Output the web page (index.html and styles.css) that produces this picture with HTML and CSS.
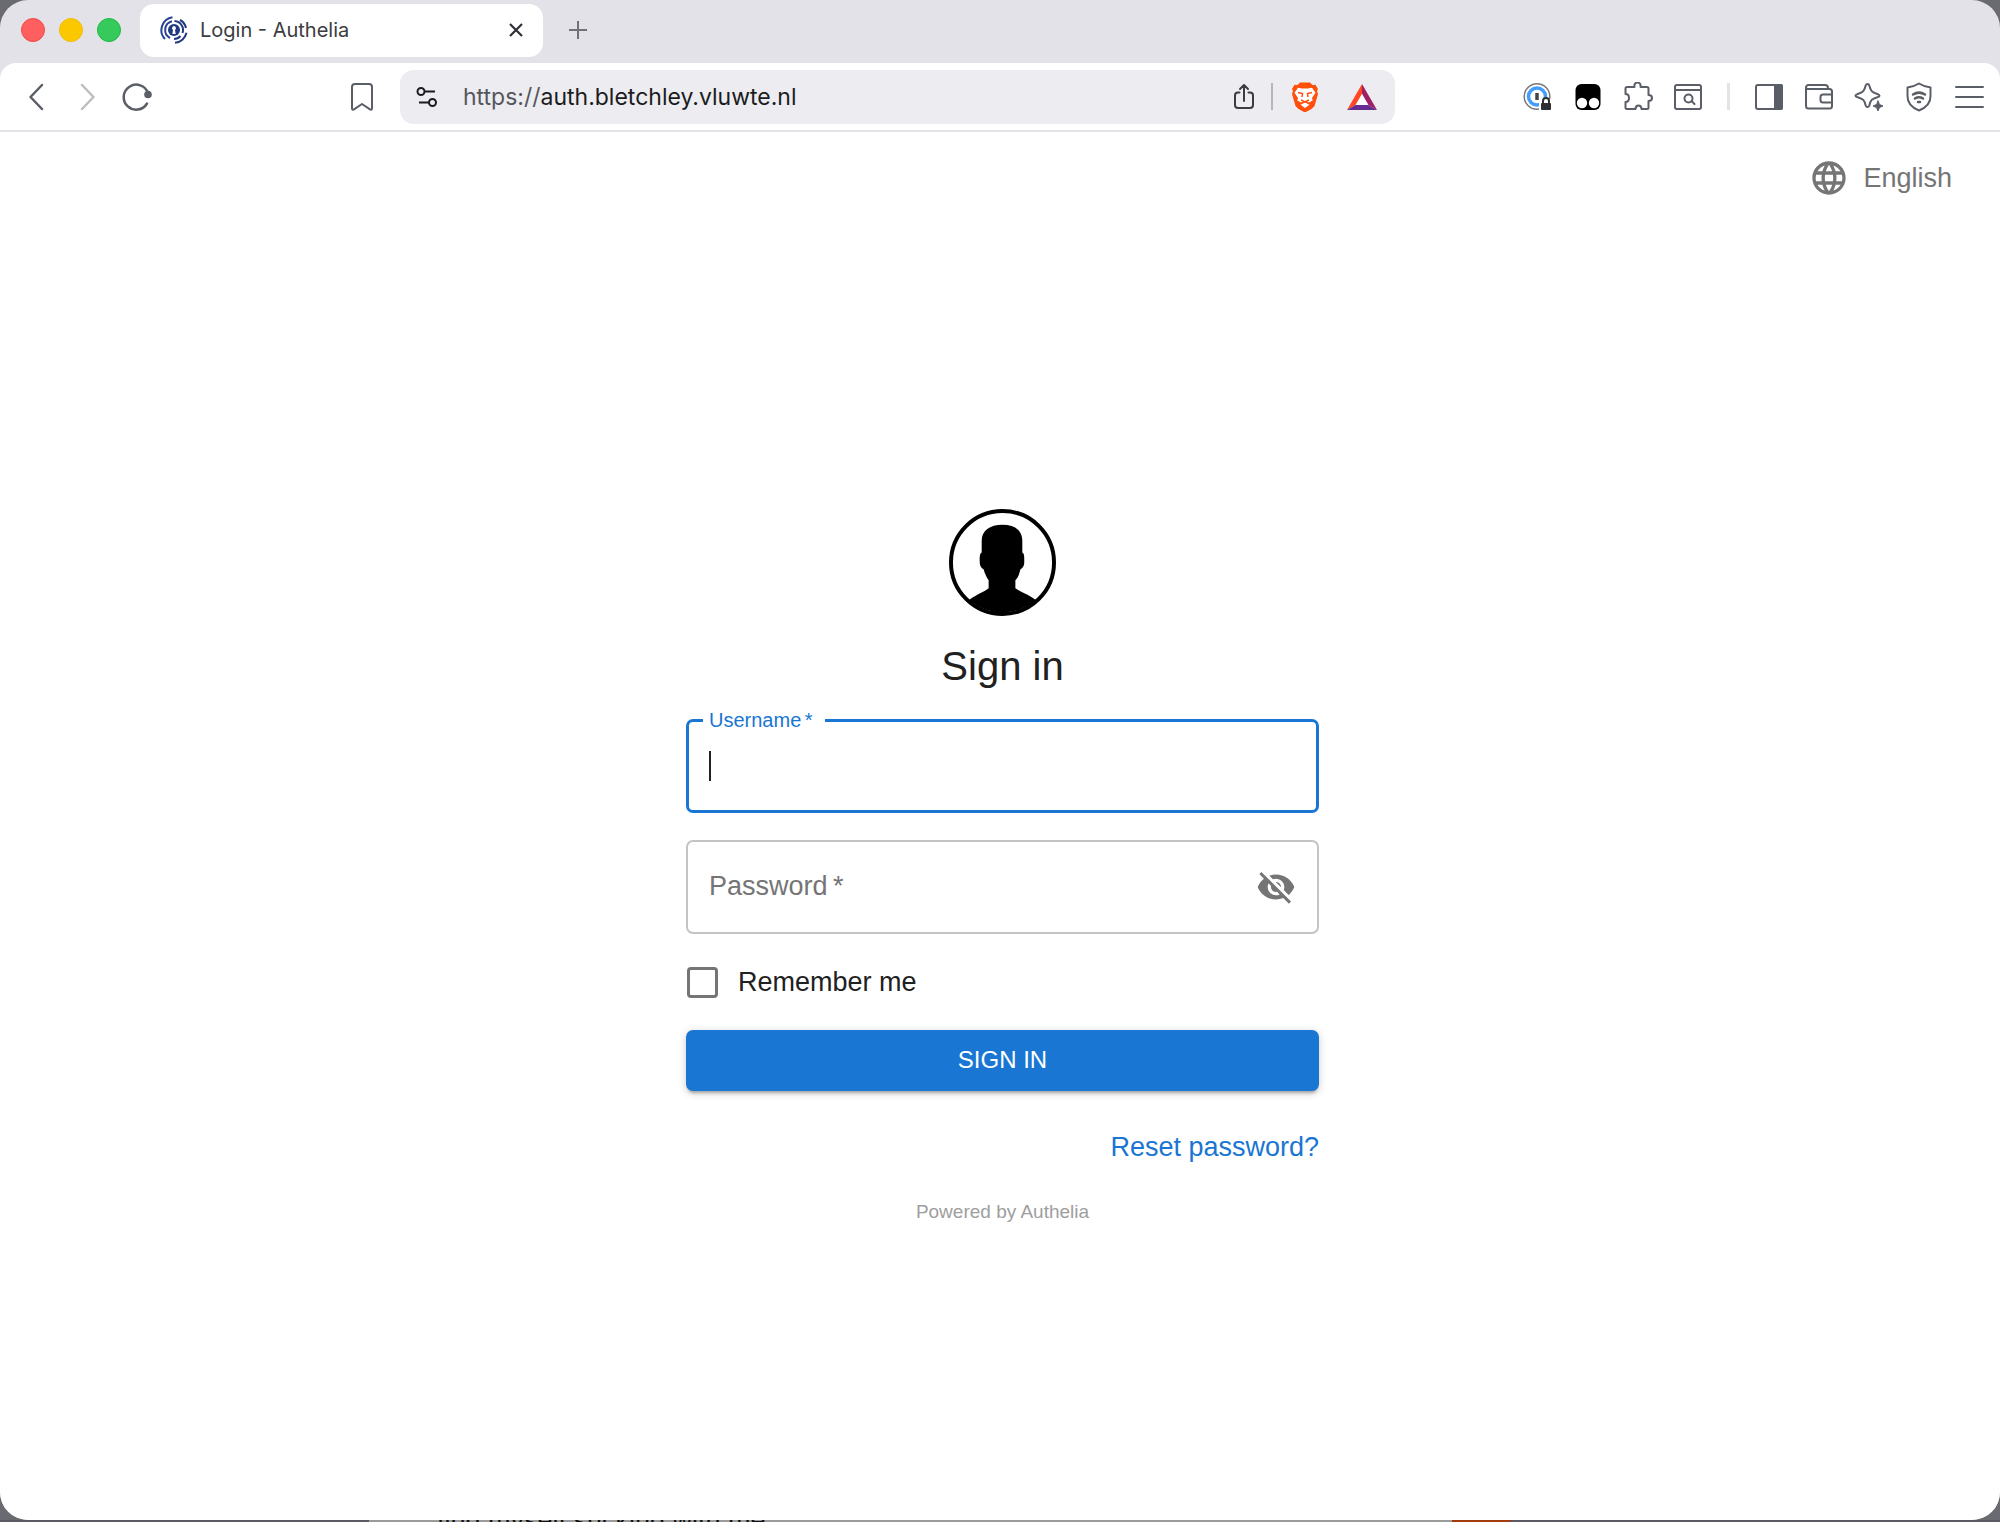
FILE: index.html
```html
<!DOCTYPE html>
<html lang="en">
<head>
    <meta charset="UTF-8">
    <meta name="viewport" content="width=device-width, initial-scale=1.0">
    <title>Login - Authelia</title>
    <link rel="stylesheet" href="styles.css">
</head>
<body>

<div class="window">
    <!-- Tab strip -->
    <div class="tab-strip">
        <div class="lights">
            <span class="light red"></span>
            <span class="light yellow"></span>
            <span class="light green"></span>
        </div>
        <div class="tab">
            <svg class="favicon" viewBox="0 0 28 28" fill="none" stroke="#2b4493" stroke-width="2">
                <circle cx="14" cy="14" r="6" fill="#1f3a80" stroke="none"/>
                <path d="M14 10a2.200 2.200 0 0 1 1 4l.7 4h-3.400l.7-4a2.200 2.200 0 0 1 1-4z" fill="#fff" stroke="none"/>
                <path d="M12 5.300A9 9 0 0 0 10 22"/>
                <path d="M14.500 5A9 9 0 0 1 22.500 17" stroke="#1f3a80"/>
                <path d="M14 23a9 9 0 0 0 6.500-3" stroke="#1f3a80"/>
                <path d="M12.500 1.200A13 13 0 0 0 5 23"/>
                <path d="M20 4a12 12 0 0 1 6 8" stroke="#1f3a80"/>
                <path d="M15 26.800a13 13 0 0 0 11.500-10" stroke="#1f3a80"/>
            </svg>
            <span class="tab-title">Login - Authelia</span>
            <button class="icon-button" aria-label="Close tab">
                <svg width="16" height="16" viewBox="0 0 16 16" fill="none" stroke="#2f3136" stroke-width="2.200"><path d="M2 2l12 12M14 2L2 14"/></svg>
            </button>
        </div>
        <button class="icon-button new-tab" aria-label="New tab">
            <svg width="18" height="18" viewBox="0 0 18 18" fill="none" stroke="#707276" stroke-width="2"><path d="M9 0v18M0 9h18"/></svg>
        </button>
    </div>

    <!-- Toolbar -->
    <div class="toolbar">
        <div class="nav-buttons">
            <button class="icon-button" aria-label="Back">
                <svg class="icon bold" viewBox="0 0 30 30"><path d="M20 3L8.500 15 20 27"/></svg>
            </button>
            <button class="icon-button disabled" aria-label="Forward">
                <svg class="icon bold" viewBox="0 0 30 30"><path d="M10 3l11.500 12L10 27"/></svg>
            </button>
            <button class="icon-button" aria-label="Reload">
                <svg class="icon bold" viewBox="0 0 30 30"><path d="M25 21.500A12.500 12.500 0 1 1 26 11"/><circle cx="26" cy="12.500" r="3.800" fill="#5a5e66" stroke="none"/></svg>
            </button>
        </div>
        <button class="icon-button bookmark" aria-label="Bookmark">
            <svg class="icon" viewBox="0 0 30 30"><path d="M8 2h14a3 3 0 0 1 3 3v21.500c0 1-1 1.500-2 .9L15 22l-8 5.400c-1 .6-2 .1-2-.9V5a3 3 0 0 1 3-3z"/></svg>
        </button>
        <div class="address-bar">
            <svg class="site-icon" viewBox="0 0 22 22" fill="none" stroke="#1b1c20" stroke-width="2"><circle cx="5" cy="5.500" r="3.500"/><path d="M8.500 5.500H19M3 16.500h10"/><circle cx="16.500" cy="16.500" r="3.500"/></svg>
            <span class="url"><span class="scheme">https://</span>auth.bletchley.vluwte.nl</span>
            <button class="icon-button" aria-label="Share">
                <svg class="icon dark" viewBox="0 0 30 30"><path d="M10.500 10.500H9a3 3 0 0 0-3 3v9.500a3 3 0 0 0 3 3h12a3 3 0 0 0 3-3v-9.500a3 3 0 0 0-3-3h-1.500M15 19V3.500M11 7l4-4 4 4"/></svg>
            </button>
            <span class="divider"></span>
            <button class="icon-button" aria-label="Brave Shields">
                <svg width="30" height="30" viewBox="0 0 30 30">
                    <path fill="#ff4f0a" d="M10 .5h10l2.500 2.500 3-.2L28 7l-1 2 1 3-3.500 12-3 3-6.500 3.500L8.500 27l-3-3L2 12l1-3-1-2 2.500-4.200 3 .2z"/>
                    <path fill="#fff" d="M8 5.800l4 .7h6l4-.7 3.500 5-3.500 5.200.7 2.500-3.700 2-3-1.500h-2l-3 1.500-3.700-2L8 16l-3.500-5.200z"/>
                    <path fill="#fff" d="M15 20.500l4.500 2.200-4.500 3.300-4.500-3.300z"/>
                    <path fill="none" stroke="#ff4f0a" stroke-width="1.500" d="M8 10.500l4.500 1-.5 3.500M22 10.500l-4.500 1 .5 3.500M11 18l4 2 4-2"/>
                </svg>
            </button>
            <button class="icon-button rewards" aria-label="Brave Rewards">
                <svg width="30" height="30" viewBox="0 0 30 30"><path fill="#ff4724" d="M15 2v10L8.500 23 0 28z"/><path fill="#9e1f63" d="M15 2l15 26-8.500-5L15 12z"/><path fill="#662d91" d="M0 28l8.500-5h13l8.500 5z"/><path fill="#fff" d="M15 12l6 11H9z"/></svg>
            </button>
        </div>
        <div class="extensions">
            <button class="icon-button" aria-label="1Password">
                <svg class="icon" viewBox="0 0 30 30"><circle cx="14" cy="14.500" r="12.800" stroke="#777" stroke-width="1.500"/><circle cx="14" cy="14.500" r="8.500" stroke="#459cff" stroke-width="3.500"/><path d="M14 11v7" stroke="#444" stroke-width="3.500" stroke-linecap="butt"/><path d="M16 17h14v13H16z" fill="#fff" stroke="none"/><rect x="18" y="21" width="10" height="7" rx="1" fill="#2d2f33" stroke="none"/><path d="M20 21v-2a3 3 0 0 1 6 0v2" stroke="#2d2f33"/></svg>
            </button>
            <button class="icon-button" aria-label="Tampermonkey">
                <svg width="30" height="30" viewBox="0 0 30 30"><rect x="2.500" y="2" width="25" height="26" rx="6"/><circle cx="9" cy="21" r="5.200" fill="#fff"/><circle cx="21" cy="21" r="5.200" fill="#fff"/></svg>
            </button>
            <button class="icon-button" aria-label="Extensions">
                <svg class="icon" viewBox="0 0 30 30"><path d="M4 5h7.500c-.5-3 1-4.500 3-4.500s3.500 1.500 3 4.500h6.500a1.500 1.500 0 0 1 1.500 1.500V13c2.500 0 3.500 1.500 3.500 3s-1 3-3.500 3v6.500a1.500 1.500 0 0 1-1.500 1.500h-5.500c0-2.500-1.200-3.500-3-3.500s-3 1-3 3.500H4a1.500 1.500 0 0 1-1.500-1.500V20C5 20 6 18 6 16s-1-4-3.500-4V6.500A1.500 1.500 0 0 1 4 5z"/></svg>
            </button>
            <button class="icon-button" aria-label="Search page">
                <svg class="icon" viewBox="0 0 30 30"><rect x="2" y="3" width="26" height="24" rx="2"/><path d="M2 8h26M18.500 19l3 3"/><circle cx="15.500" cy="16.500" r="4"/></svg>
            </button>
        </div>
        <span class="divider light-divider"></span>
        <div class="extensions">
            <button class="icon-button" aria-label="Sidebar">
                <svg class="icon" viewBox="0 0 30 30"><rect x="2" y="3" width="26" height="24" rx="2"/><path d="M21 3h6a1 1 0 0 1 1 1v22a1 1 0 0 1-1 1h-6z" fill="#5a5e66"/></svg>
            </button>
            <button class="icon-button" aria-label="Wallet">
                <svg class="icon" viewBox="0 0 30 30"><path d="M2 7v17a2.500 2.500 0 0 0 2.500 2.500h21A2.500 2.500 0 0 0 28 24V9.500A2.500 2.500 0 0 0 25.500 7H2V5.500A2.500 2.500 0 0 1 4.500 3H21a3 3 0 0 1 3 3v1M28 12.500h-9a2.500 2.500 0 0 0-2.500 2.500v3a2.500 2.500 0 0 0 2.500 2.500h9"/></svg>
            </button>
            <button class="icon-button" aria-label="Leo AI">
                <svg class="icon" viewBox="0 0 30 30"><path d="M13.500 2c1 0 1.500.6 1.800 1.500 1.300 5.500 2.500 6.800 8 8.500 3 1 3 2.300 0 3.200-5.500 1.700-6.700 2.800-8 8.300-.6 2-3 2-3.600 0-1.300-5.500-2.500-6.600-8-8.300-3-.9-3-2.200 0-3.200 5.500-1.700 6.700-3 8-8.500.3-.9.800-1.500 1.800-1.500z"/><path d="M24 19l1.500 3.500L29 24l-3.500 1.500L24 29l-1.500-3.500L19 24l3.500-1.500z" fill="#5a5e66" stroke-width="1"/></svg>
            </button>
            <button class="icon-button" aria-label="VPN">
                <svg class="icon" viewBox="0 0 30 30"><path d="M15 1.500c4 2.500 7 3.500 11.500 4v8.800c0 6.500-4.500 11.500-11.500 14.200-7-2.700-11.500-7.700-11.500-14.200V5.500c4.500-.5 7.500-1.500 11.500-4z"/><path stroke-width="2.500" d="M9 12.500c4-2.500 8-2.500 12 0M11 16.500c2.700-1.700 5.300-1.700 8 0M14 20h2"/></svg>
            </button>
            <button class="icon-button" aria-label="Menu">
                <svg class="icon" viewBox="0 0 30 30"><path d="M2 5h27M2 15h27M2 25h27"/></svg>
            </button>
        </div>
    </div>

    <!-- Login page -->
    <div class="page">
        <header class="page-header">
            <button class="language">
                <svg width="40" height="40" viewBox="0 0 24 24" fill="#757575"><path d="M11.990 2C6.470 2 2 6.480 2 12s4.470 10 9.990 10C17.520 22 22 17.520 22 12S17.520 2 11.990 2zm6.930 6h-2.950c-.320-1.250-.780-2.450-1.380-3.560 1.840.630 3.370 1.910 4.330 3.560zM12 4.040c.830 1.200 1.480 2.530 1.910 3.960h-3.820c.430-1.430 1.080-2.760 1.910-3.960zM4.260 14C4.100 13.360 4 12.690 4 12s.100-1.360.260-2h3.380c-.080.660-.140 1.320-.140 2s.060 1.340.140 2H4.260zm.820 2h2.950c.320 1.250.780 2.450 1.380 3.560-1.840-.630-3.370-1.900-4.330-3.560zm2.950-8H5.080c.960-1.660 2.490-2.930 4.330-3.560C8.810 5.550 8.350 6.750 8.030 8zM12 19.960c-.830-1.200-1.480-2.530-1.910-3.960h3.820c-.430 1.430-1.080 2.760-1.910 3.960zM14.340 14H9.660c-.090-.660-.160-1.320-.160-2s.070-1.350.160-2h4.680c.090.650.160 1.320.160 2s-.070 1.340-.160 2zm.250 5.560c.600-1.110 1.060-2.310 1.380-3.560h2.950c-.960 1.650-2.490 2.930-4.330 3.560zM16.360 14c.080-.660.140-1.320.140-2s-.060-1.340-.140-2h3.380c.160.640.260 1.310.260 2s-.100 1.360-.260 2h-3.380z"/></svg>
                English
            </button>
        </header>
        <main class="login">
            <svg class="avatar" viewBox="0 0 108 108">
                <circle cx="54" cy="54" r="52" fill="#fff" stroke="#000" stroke-width="4"/>
                <path d="M54 16c-13 0-21 6-21 16v12c-2 1-2 4-2 9 0 4 1 6 4 8 1 4 3 8 5 11v8c-3 3-12 6-20 12a53 53 0 0 0 68 0c-8-6-17-9-21-12v-8c3-3 4-7 5-11 3-2 4-4 4-8 0-5 0-8-2-9V32c0-10-7-16-20-16z"/>
            </svg>
            <h1>Sign in</h1>
            <form class="login-form" onsubmit="return false">
                <div class="field focused">
                    <label for="username">Username <span class="star">*</span></label>
                    <span class="caret"></span>
                    <input type="text" id="username" autocomplete="off">
                </div>
                <div class="field">
                    <label for="password">Password <span class="star">*</span></label>
                    <input type="password" id="password">
                    <button type="button" class="icon-button" aria-label="Show password" onclick="togglePassword()">
                        <svg width="40" height="40" viewBox="0 0 24 24" fill="#757575"><path d="M12 7c2.760 0 5 2.240 5 5 0 .650-.130 1.260-.360 1.830l2.920 2.920c1.510-1.260 2.700-2.890 3.430-4.750-1.730-4.390-6-7.500-11-7.500-1.400 0-2.740.250-3.980.700l2.160 2.160C10.740 7.130 11.350 7 12 7zM2 4.270l2.280 2.280.460.460C3.080 8.300 1.780 10.020 1 12c1.730 4.390 6 7.500 11 7.500 1.550 0 3.030-.300 4.380-.840l.420.420L19.730 22 21 20.730 3.270 3 2 4.270zM7.530 9.800l1.550 1.550c-.050.210-.080.430-.080.650 0 1.660 1.340 3 3 3 .220 0 .440-.030.650-.080l1.550 1.550c-.670.330-1.410.530-2.200.530-2.760 0-5-2.240-5-5 0-.790.200-1.530.530-2.200zm4.310-.780l3.150 3.150.020-.160c0-1.660-1.340-3-3-3l-.170.010z"/></svg>
                    </button>
                </div>
                <label class="remember"><input type="checkbox" id="remember">Remember me</label>
                <button type="submit" class="submit">SIGN IN</button>
                <a class="reset" href="#">Reset password?</a>
            </form>
            <a class="powered" href="#">Powered by Authelia</a>
        </main>
    </div>
</div>

<!-- Sliver of the desktop under the window -->
<div class="desktop">
    <div class="note">find myself sucking with me</div>
    <div class="accent"></div>
</div>

<script>
    function togglePassword() {
        const input = document.getElementById('password');
        input.type = input.type === 'password' ? 'text' : 'password';
    }
</script>

</body>
</html>
```
FILE: styles.css
```css
* {
    box-sizing: border-box;
}

body {
    font-family: "Liberation Sans", Arial, sans-serif;
    font-size: 27px;
    margin: 0;
    min-height: 100vh;
    display: flex;
    flex-direction: column;
    background: #696b70;
    color: #212121;
}

button {
    font: inherit;
    border: none;
    cursor: pointer;
}

a {
    text-decoration: none;
}

.window {
    flex: 1;
    display: flex;
    flex-direction: column;
    background: #e3e2e8;
    border-radius: 28px;
    overflow: hidden;
}

.icon-button {
    display: flex;
    padding: 0;
    background: none;
}

.icon {
    width: 30px;
    height: 30px;
    fill: none;
    stroke: #5a5e66;
    stroke-width: 2;
    stroke-linecap: round;
    stroke-linejoin: round;
}

.icon.bold {
    stroke-width: 2.5;
}

.icon.dark {
    stroke: #3b3c41;
}

/* Tab strip */
.tab-strip {
    display: flex;
    align-items: center;
    height: 63px;
    padding: 0 21px 3px;
    font-family: Inter, sans-serif;
}

.lights {
    display: flex;
    gap: 14px;
    width: 119px;
}

.light {
    width: 24px;
    height: 24px;
    border-radius: 50%;
    border: 1px solid;
}

.red {
    background: #ff5f5f;
    border-color: #f04848;
}

.yellow {
    background: #fbc800;
    border-color: #f0bd00;
}

.green {
    background: #36c95c;
    border-color: #1cba44;
}

.tab {
    display: flex;
    align-items: center;
    width: 403px;
    height: 53px;
    padding: 0 19px 0 20px;
    border-radius: 14px;
    background: #fff;
}

.favicon {
    width: 28px;
    height: 28px;
}

.tab-title {
    flex: 1;
    margin-left: 12px;
    font-size: 20px;
    color: #3b3c41;
}

.new-tab {
    margin-left: 26px;
}

/* Toolbar */
.toolbar {
    display: flex;
    align-items: center;
    height: 69px;
    padding: 0 16px 0 22px;
    border-bottom: 2px solid #e3e2e8;
    border-radius: 16px 16px 0 0;
    background: #fff;
}

.nav-buttons,
.extensions {
    display: flex;
    gap: 20px;
}

.disabled {
    opacity: 0.4;
}

.bookmark {
    margin-left: 195px;
}

.address-bar {
    display: flex;
    align-items: center;
    flex: 1;
    height: 54px;
    margin-left: 23px;
    margin-right: 128px;
    padding: 0 18px 0 16px;
    border-radius: 14px;
    background: #edecf1;
    font-family: Inter, sans-serif;
    font-size: 23px;
    color: #1b1c20;
}

.site-icon {
    width: 22px;
    height: 22px;
}

.url {
    flex: 1;
    margin-left: 25px;
}

.scheme {
    color: #55565c;
}

.divider {
    width: 2px;
    height: 27px;
    margin: 0 17px 0 12px;
    background: #b5b6bb;
}

.rewards {
    margin-left: 27px;
}

.light-divider {
    width: 3px;
    margin: 0 24px;
    background: #e3e2e8;
}

/* Login page */
.page {
    flex: 1;
    display: flex;
    flex-direction: column;
    background: #fff;
}

.page-header {
    display: flex;
    justify-content: flex-end;
    padding: 26px 48px;
}

.language {
    display: flex;
    align-items: center;
    gap: 14px;
    padding: 0;
    background: none;
    color: #757575;
}

.login {
    flex: 1;
    display: flex;
    flex-direction: column;
    align-items: center;
    justify-content: center;
    padding: 0 0 12px 5px;
}

.avatar {
    width: 107px;
    height: 107px;
}

h1 {
    margin: 24px 0 27px;
    font-size: 40px;
    font-weight: 400;
    line-height: 52px;
}

.login-form {
    display: flex;
    flex-direction: column;
    width: 633px;
    max-width: 90%;
}

.field {
    position: relative;
    display: flex;
    align-items: center;
    height: 94px;
    margin-bottom: 27px;
    padding: 0 21px;
    border: 2px solid #c4c4c4;
    border-radius: 7px;
}

.field label {
    position: absolute;
    left: 21px;
    color: #757575;
}

.field input {
    flex: 1;
    min-width: 0;
    padding: 0;
    border: none;
    outline: none;
    background: none;
    font: inherit;
}

.star {
    margin-left: -2px;
}

.field.focused {
    padding: 0 20px;
    border: 3px solid #1976d2;
}

.field.focused label {
    top: -14px;
    left: 14px;
    padding: 0 12px 0 6px;
    background: #fff;
    font-size: 20px;
    line-height: 24px;
    color: #1976d2;
}

.caret {
    width: 2px;
    height: 30px;
    background: #212121;
}

.remember {
    display: flex;
    align-items: center;
    gap: 20px;
    height: 44px;
    align-self: flex-start;
}

.remember input {
    appearance: none;
    width: 31px;
    height: 31px;
    margin: 0 0 0 1px;
    border: 3px solid #757575;
    border-radius: 4px;
}

.submit {
    height: 61px;
    margin: 25px 0 36px;
    border-radius: 7px;
    background: #1976d2;
    color: #fff;
    font-size: 24px;
    box-shadow: 0 4px 3px -2px rgba(0, 0, 0, 0.25), 0 2px 8px rgba(0, 0, 0, 0.2);
}

.reset {
    align-self: flex-end;
    line-height: 40px;
    color: #1976d2;
}

.powered {
    margin-top: 33px;
    font-size: 19px;
    line-height: 24px;
    color: #9e9e9e;
}

/* Desktop */
.desktop {
    display: flex;
    height: 2px;
    padding-left: 369px;
    background: #5b5a62;
    overflow: hidden;
}

.note {
    flex: 1;
    padding-left: 68px;
    background: #9b9b9b;
    color: #111;
    line-height: 2px;
    white-space: nowrap;
}

.accent {
    width: 59px;
    margin-right: 489px;
    background: #a33c0c;
}
```
